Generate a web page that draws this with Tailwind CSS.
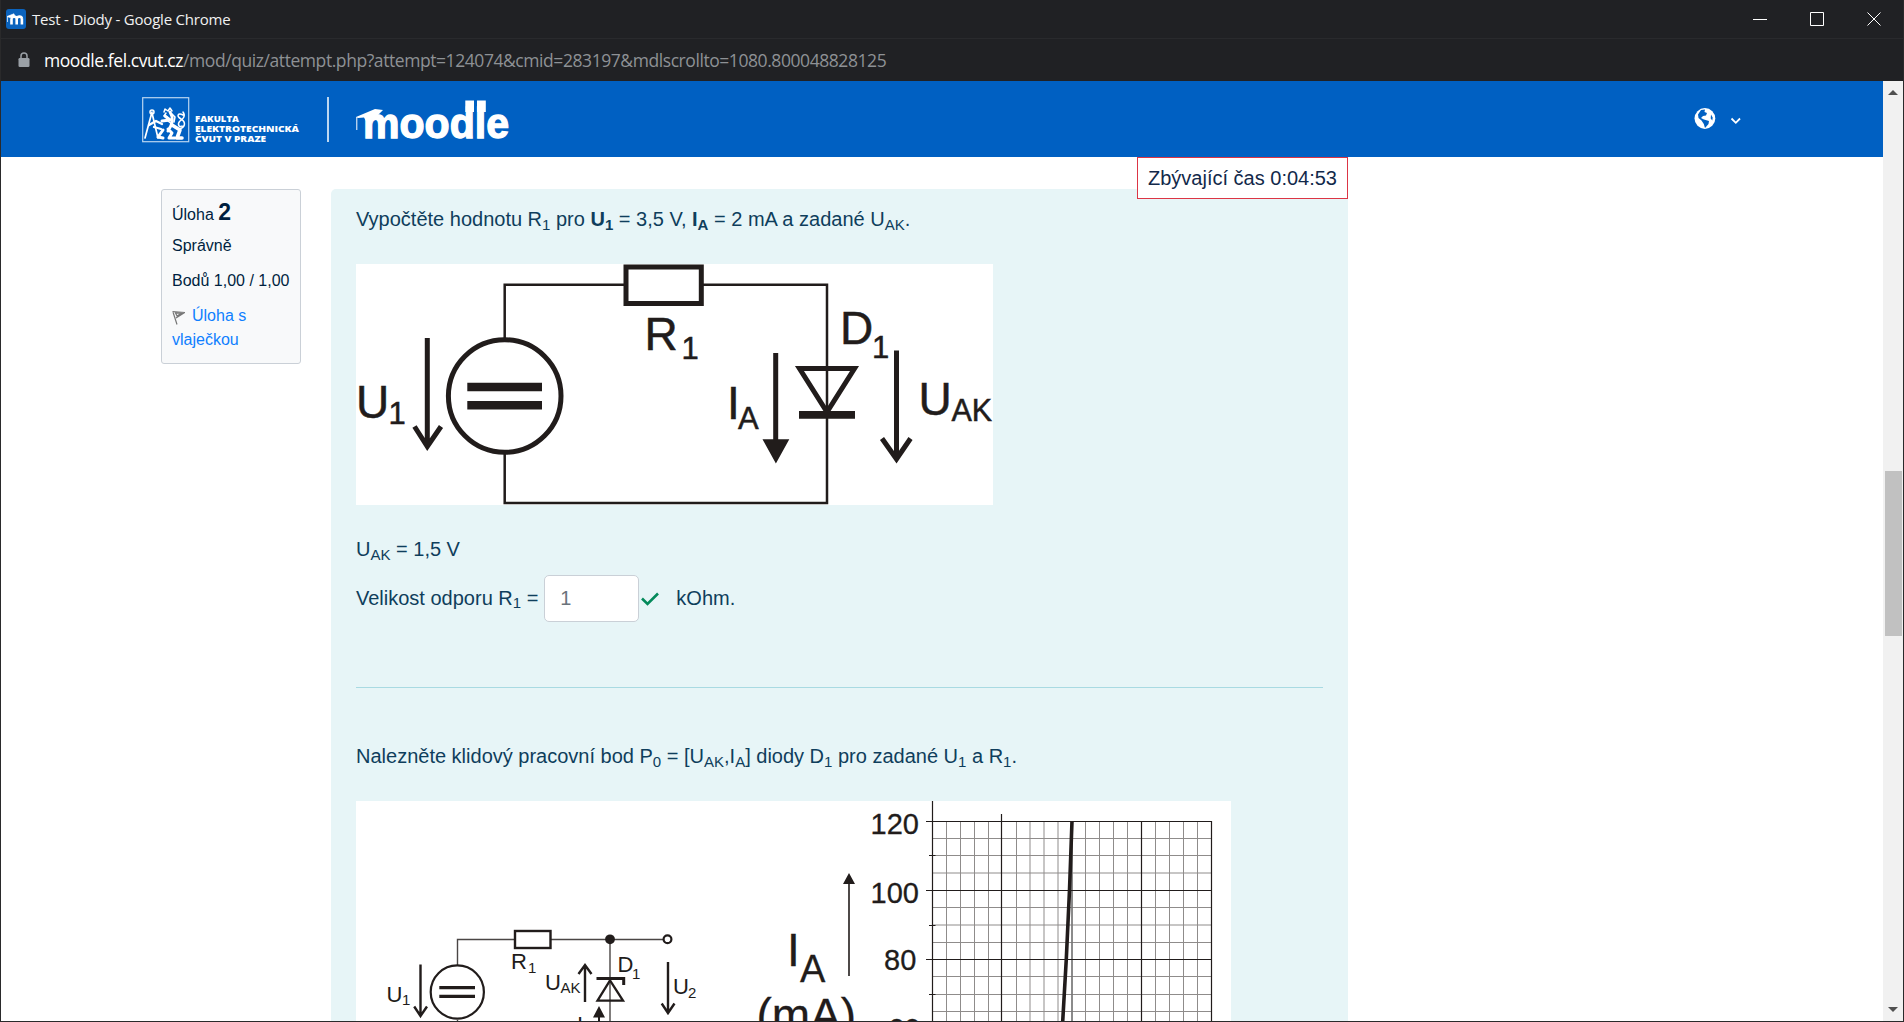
<!DOCTYPE html>
<html lang="cs">
<head>
<meta charset="utf-8">
<title>Test - Diody</title>
<script src="https://cdn.jsdelivr.net/npm/@tailwindcss/browser@4"></script>
</head>
<body class="h-[1022px] w-[1904px] overflow-hidden bg-[#202124] font-['Liberation_Sans',Arial,sans-serif]">
<div class="flex h-[1022px] flex-col overflow-hidden border-x border-b border-[#2a2a2b]">
  <!-- Window title bar -->
  <div class="flex h-[38px] shrink-0 items-center justify-between pl-[5px] pr-[22px]">
    <div class="flex items-center gap-[6px]">
      <svg class="h-5 w-5" viewBox="0 0 20 20"><rect width="20" height="20" rx="3" fill="#0b63bd"/><path d="M5.500 15.500V9.500M10.700 15.500V9M15.900 15.500V9.500M5.500 9.500C6 7 10.200 7 10.700 9.500M10.700 9.500C11.500 7 15.500 7 15.900 9.500" fill="none" stroke="#fff" stroke-width="2.600"/><path d="M1 7.500 8 4.800 8.500 7 4 8.500ZM1.500 8v5" fill="#fff" stroke="#fff" stroke-width=".7"/></svg>
      <span class="whitespace-nowrap font-['Open_Sans',sans-serif] text-[15px] leading-5 tracking-[-0.2px] text-[#f1f1f1]">Test - Diody - Google Chrome</span>
    </div>
    <svg class="h-[14px] w-[128px]" viewBox="0 0 128 14" fill="none" stroke="#fff" stroke-width="1"><path d="M0 7.500H14M58 .5H70.500V13.500H57.500V.5Z"/><path d="M114.500.5 127.500 13.500M127.500.5 114.500 13.500"/></svg>
  </div>
  <!-- Address bar -->
  <div class="flex h-[43px] shrink-0 items-center border-t border-[#292a2d] pl-[17px]">
    <svg class="h-4 w-3" viewBox="0 0 12 16"><rect x=".5" y="6" width="11" height="9" rx="1.300" fill="#9aa0a6"/><path d="M3 7V4a3 3 0 0 1 6 0v3" fill="none" stroke="#9aa0a6" stroke-width="1.500"/></svg>
    <span class="ml-[14px] whitespace-nowrap pb-px font-['Open_Sans',sans-serif] text-[17.500px] leading-6 tracking-[-0.43px] text-[#8e9195]"><span class="text-white">moodle.fel.cvut.cz</span>/mod/quiz/attempt.php?attempt=124074&amp;cmid=283197&amp;mdlscrollto=1080.800048828125</span>
  </div>
  <div class="flex min-h-0 flex-1 overflow-hidden">
    <div class="flex min-w-0 flex-1 flex-col overflow-hidden bg-white">
      <header class="flex h-[76px] shrink-0 items-start justify-between bg-[#0060c2] pl-[141px] pr-[141px]">
        <div class="flex pt-4">
          <svg class="h-[48px] w-[160px]" viewBox="142 97 160 48">
            <rect x="142.700" y="97.700" width="46" height="44" fill="none" stroke="#b9d5f1" stroke-width="1.200"/>
            <g fill="none" stroke="#fff" stroke-linecap="round" stroke-linejoin="round">
              <path d="M152 112 145 138M152 113 158 138" stroke-width="1.700"/>
              <circle cx="152" cy="112" r="2" stroke-width="1.500"/>
              <path d="M149 125 156 121 162 124M154 127 161 129" stroke-width="2.300"/>
              <path d="M170 112C174 118 173 124 168 131M165 116 170 120 162 121M163 130 158 137 163 138M168 129 172 133 169 138H175" stroke-width="3"/>
              <path d="M172 125 180 130 177 138H182" stroke-width="3.600"/>
              <path d="M164 112 165 109 168 111 170 108 172 111M166 113 164 116 167 117M172 114 175 117 174 122M168 121 173 125" stroke-width="1.500"/>
              <path d="M178 129C186 128 186 122 181 119C176 116 178 112 183 115M183 112C186 116 183 119 180 121C177 124 179 128 182 126" stroke-width="1.500"/>
            </g>
            <g fill="#fff" font-family="Open Sans,sans-serif" font-weight="800" font-size="9.200">
              <text x="195" y="122.200" textLength="44" lengthAdjust="spacingAndGlyphs">FAKULTA</text>
              <text x="195" y="131.800" textLength="104" lengthAdjust="spacingAndGlyphs">ELEKTROTECHNICKÁ</text>
              <text x="195" y="141.500" textLength="71" lengthAdjust="spacingAndGlyphs">ČVUT V PRAZE</text>
            </g>
          </svg>
          <div class="ml-[25px] h-[45px] w-[2px] bg-[#bcd7f1]"></div>
          <svg class="ml-[26px] h-[54px] w-[156px]" viewBox="355 97 156 54">
            <text x="363" y="138" fill="#fff" stroke="#fff" stroke-width="1.300" font-family="Liberation Sans,sans-serif" font-weight="700" font-size="42" textLength="146" lengthAdjust="spacingAndGlyphs">moodle</text>
            <path d="M465.300 100.500H474V112H465.300ZM477 100.500H485.800V112H477Z" fill="#fff"/>
            <path d="M356 117 375 109 383 110 378 115 380 118C375 117 370 118 366 121L364 117.500 358 118Z" fill="#fff"/>
            <path d="M356.800 117V130" stroke="#fff" stroke-width="1"/>
          </svg>
        </div>
        <svg class="mt-[26px] h-[24px] w-[49px]" viewBox="1693 107 49 24">
          <circle cx="1704.900" cy="118.500" r="10.400" fill="#fff"/>
          <path d="M1701 110 1705 109.500 1704.500 112 1707 113 1706 115.500 1703 116 1701 118 1704 119.500 1709 121 1708.500 124 1705 128 1703.800 124 1701.500 120.500 1698.500 118 1698 114.500ZM1711 114.500 1712.700 117.500 1712.300 120.500 1710.700 118.500Z" fill="#0060c2"/>
          <path d="M1731.500 118.500 1735.800 122.800 1740 118.500" fill="none" stroke="#fff" stroke-width="1.800"/>
        </svg>
      </header>
      <main class="relative flex min-h-0 flex-1 items-start overflow-hidden pl-[160px] pt-8">
        <!-- Question summary -->
        <section class="h-[175px] w-[140px] shrink-0 rounded-[3px] border border-[#cad0d7] bg-[#f8f9fa] pl-[10px] pt-[7px] text-base leading-6 text-[#001f3f]">
          <h3 class="h-[36px] leading-[30px]">Úloha <span class="text-[23px] font-bold">2</span></h3>
          <div class="h-[35px] leading-[26px]">Správně</div>
          <div class="h-[36px] leading-[26px]">Bodů 1,00 / 1,00</div>
          <a class="block text-[#0f7fff]"><svg class="mr-[7px] inline-block h-[15px] w-[13px] align-[-4px]" viewBox="0 0 13 15" fill="none" stroke="#777" stroke-width="1.200"><path d="M1 2 5 14.500M.5 1.500 12.500 2.500 4 8M3.500 3 5 6 9 3.500Z"/></svg>Úloha s<br>vlaječkou</a>
        </section>
        <!-- Question body -->
        <section class="ml-[30px] h-[832px] w-[1017px] shrink-0 overflow-hidden rounded-t-[5px] bg-[#e7f5f7] pl-[25px] pr-[25px] pt-[15px] text-[20px] leading-[30px] text-[#0f3e5c] [&_sub]:text-[15px]">
          <p class="h-[60px] whitespace-nowrap">Vypočtěte hodnotu R<sub>1</sub> pro <b>U<sub>1</sub></b> = 3,5 V, <b>I<sub>A</sub></b> = 2 mA a zadané U<sub>AK</sub>.</p>
          <svg class="block h-[241px] w-[637px] bg-white" viewBox="356 264 637 241">
            <g fill="none" stroke="#211c1b" stroke-width="2.500">
              <path d="M504.700 340V284.700H625M702 284.700H827V503H504.700V452"/>
              <circle cx="504.700" cy="396" r="56.300" stroke-width="5"/>
              <rect x="626" y="267" width="75.300" height="36.500" stroke-width="5"/>
              <path d="M427.300 338V446M414.500 426.500 427.300 446.500 441 426.500M896.500 350.500V458M882 438.500 896.500 459 910.500 438.500M775.700 353V442" stroke-width="5"/>
              <path d="M799.500 368.500H854.500L827 412Z" stroke-width="5"/>
            </g>
            <path fill="#211c1b" d="M467.300 382.700H542V391.300H467.300ZM467.300 401H542V409.500H467.300ZM799 411H855V418.700H799ZM762.500 439.300H789.300L775.900 463.500Z"/>
            <g fill="#211c1b" stroke="#211c1b" stroke-width=".5" font-family="Liberation Sans,sans-serif" font-size="46">
              <text x="356" y="418">U</text><text x="388.500" y="423.500" font-size="31">1</text>
              <text x="644.500" y="350">R</text><text x="681.500" y="358.700" font-size="31">1</text>
              <text x="727" y="418.500">I</text><text x="738" y="428.500" font-size="31">A</text>
              <text x="840" y="344">D</text><text x="872" y="357.500" font-size="31">1</text>
              <text x="918.500" y="415">U</text><text x="951.500" y="421" font-size="30.500">AK</text>
            </g>
          </svg>
          <p class="mt-[29px] h-[33px]">U<sub>AK</sub> = 1,5 V</p>
          <div class="mt-[8px] flex h-[47px] items-center whitespace-nowrap">
            <span class="pb-[2px]">Velikost odporu R<sub>1</sub> =</span>
            <span class="ml-[6px] flex h-[47px] w-[95px] items-center rounded-[5px] border border-[#cad0d7] bg-white pb-[2px] pl-[15px] text-[#6a737b]">1</span>
            <svg class="ml-[2px] h-[14px] w-[18px]" viewBox="0 0 18 14"><path d="M1 6.500 6.500 12 17 1.500" fill="none" stroke="#048a5b" stroke-width="2.600"/></svg>
            <span class="ml-[17px] pb-[2px]">kOhm.</span>
          </div>
          <div class="mt-[65px] h-px bg-[#a9dae2]"></div>
          <p class="mt-[53px] h-[60px] whitespace-nowrap">Nalezněte klidový pracovní bod P<sub>0</sub> = [U<sub>AK</sub>,I<sub>A</sub>] diody D<sub>1</sub> pro zadané U<sub>1</sub> a R<sub>1</sub>.</p>
          <svg class="block h-[220px] w-[875px] bg-white" viewBox="356 801 875 220">
            <!-- Zener diode circuit -->
            <g fill="none" stroke="#211c1b">
              <path d="M457.500 965V939.500H514M551 939.500H663M610 939.500V1040M457.500 1020V1040" stroke="#4a4645" stroke-width="1.400"/>
              <circle cx="457.300" cy="992" r="26.600" stroke-width="2.200"/>
              <rect x="515" y="931" width="35.500" height="17" stroke-width="2.400"/>
              <circle cx="667.500" cy="939.300" r="3.900" stroke-width="2.200"/>
              <path d="M420.500 964.500V1016M414.200 1006.500 420.500 1016 427 1006.500M585 1002V966M578.500 974 585 965 591.500 974M668 962V1012M661.700 1003.500 668 1013 674.500 1003.500" stroke-width="2.400"/>
              <path d="M597.500 1000.700H623L610 980.500Z" stroke-width="2.300"/>
              <path d="M596.500 978.500H623.700V985" stroke-width="3"/>
              <path d="M599 1014V1040" stroke-width="2"/>
            </g>
            <circle cx="610" cy="939.300" r="4.900" fill="#211c1b"/>
            <path fill="#211c1b" d="M439.300 986H475V989.200H439.300ZM439.300 994.700H475V998H439.300ZM593 1017.500H605L599 1006ZM843 884H855L849 873Z"/>
            <g fill="#211c1b" font-family="Liberation Sans,sans-serif" font-size="22">
              <text x="386.500" y="1001.700">U</text><text x="402" y="1005" font-size="15">1</text>
              <text x="511" y="969">R</text><text x="528" y="973" font-size="15">1</text>
              <text x="545" y="990">U</text><text x="560.500" y="992.500" font-size="15">AK</text>
              <text x="617.500" y="972">D</text><text x="632" y="978.500" font-size="15">1</text>
              <text x="673" y="994">U</text><text x="688" y="998" font-size="15">2</text>
              <text x="577" y="1031.500">I</text>
            </g>
            <!-- Diode characteristic -->
            <path d="M849 880V976" stroke="#211c1b" stroke-width="1.600"/>
            <g fill="#211c1b" stroke="#211c1b" stroke-width=".3" font-family="Liberation Sans,sans-serif">
              <text x="787" y="966" font-size="46">I</text><text x="800" y="981.500" font-size="38">A</text>
              <text x="756.500" y="1031" font-size="46">(mA)</text>
              <g font-size="29"><text x="870.500" y="834">120</text><text x="870.500" y="903">100</text><text x="884" y="969.500">80</text><text x="888" y="1039">60</text></g>
            </g>
            <path d="M932 838.500H1211M932 855.500H1211M932 873H1211M932 907.500H1211M932 925H1211M932 942.500H1211M932 976.500H1211M932 994.500H1211M932 1011.500H1211M946.500 821V1041M960.500 821V1041M974.500 821V1041M988.500 821V1041M1016.500 821V1041M1030 821V1041M1044 821V1041M1058 821V1041M1085.500 821V1041M1099.500 821V1041M1113.500 821V1041M1127.500 821V1041M1155.500 821V1041M1169.500 821V1041M1183.500 821V1041M1197.500 821V1041" stroke="#8f8c8b" fill="none"/>
            <path d="M1072 821V1041" stroke="#777" stroke-width="1.700"/>
            <path d="M932.500 801V1041M926 821.500H1212M926 890.500H1212M926 959.500H1212M929 855.500H935.500M929 925.500H935.500M929 994.500H935.500M1001.500 814V1041M1141.500 821V1041M1211.500 821V1041" fill="none" stroke="#211c1b" stroke-width="1.200"/>
            <path d="M1072 821 1069.500 890 1066.300 959 1062.500 1025" fill="none" stroke="#211c1b" stroke-width="3.600"/>
          </svg>
        </section>
        <!-- Countdown over the question -->
        <div class="absolute left-[1136px] top-0 flex h-[42px] w-[211px] items-center justify-center whitespace-nowrap border border-[#dc3545] bg-white text-[20px] text-[#12294a]">Zbývající čas 0:04:53</div>
      </main>
    </div>
    <!-- Scrollbar -->
    <div class="flex w-5 shrink-0 flex-col items-center bg-[#f1f1f1] pb-[9px] pt-[9px]">
      <svg class="h-[5px] w-[10px] shrink-0" viewBox="0 0 10 5"><path d="M0 5 5 0 10 5Z" fill="#505050"/></svg>
      <div class="mt-[376px] h-[165px] w-[17px] bg-[#c1c1c1]"></div>
      <svg class="mt-auto h-[5px] w-[10px] shrink-0" viewBox="0 0 10 5"><path d="M0 0 5 5 10 0Z" fill="#505050"/></svg>
    </div>
  </div>
</div>
</body>
</html>
